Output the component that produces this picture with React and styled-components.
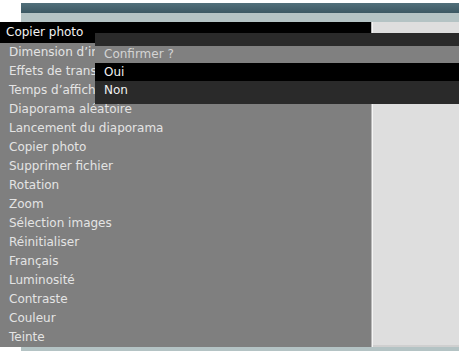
import styled, { createGlobalStyle } from "styled-components";

const GlobalStyle = createGlobalStyle`
  html, body {
    margin: 0;
    padding: 0;
    background: #ffffff;
  }
`;

const Screen = styled.div`
  position: relative;
  width: 459px;
  height: 351px;
  overflow: hidden;
  display: flex;
  flex-direction: column;
  background: #ffffff;
  font-family: "DejaVu Sans", Verdana, sans-serif;
  font-size: 12px;
`;

const TopStrip = styled.div`
  margin-left: 21px;
  padding-top: 3px;
  display: flex;
  flex-direction: column;
`;

const TealBar = styled.div`
  height: 10px;
  background: linear-gradient(#52707b, #3c5863);
`;

const PaleBar = styled.div`
  height: 9px;
  background: #b4c3c4;
`;

const Body = styled.div`
  display: flex;
  height: 325px;
`;

const Menu = styled.div`
  width: 371px;
  display: flex;
  flex-direction: column;
  background: #7f7f7f;
`;

const MenuHeader = styled.div`
  height: 21px;
  box-sizing: border-box;
  padding: 2px 0 0 6px;
  background: #000000;
  color: #f2f2f2;
  line-height: 17px;
`;

const MenuItem = styled.div`
  height: 19px;
  line-height: 19px;
  padding-left: 7px;
  margin-left: 2px;
  color: #e4e4e4;
  white-space: nowrap;
`;

const SidePanel = styled.div`
  flex: 1;
  background: #dedede;
  border-left: 1px solid #b8b8b8;
  box-shadow: inset 1px 0 0 #f4f4f4, inset 0 -2px 0 #cfcfcf;
`;

const BottomBar = styled.div`
  margin-left: 21px;
  height: 4px;
  background: #b4c3c4;
`;

const Dialog = styled.div`
  position: absolute;
  left: 95px;
  top: 33px;
  right: 0;
  background: #2a2a2a;
  padding: 13px 0 5px;
  display: flex;
  flex-direction: column;
`;

const DialogRow = styled.div`
  height: ${(p) => (p.$title ? 17 : 18)}px;
  line-height: ${(p) => (p.$title ? 17 : 18)}px;
  padding-left: 9px;
  background: ${(p) => (p.$title ? "#808080" : p.$active ? "#000000" : "transparent")};
  color: ${(p) => (p.$title ? "#d4d4d4" : "#f0f0f0")};
`;

const items = [
  "Dimension d'image",
  "Effets de transition",
  "Temps d'affichage",
  "Diaporama aléatoire",
  "Lancement du diaporama",
  "Copier photo",
  "Supprimer fichier",
  "Rotation",
  "Zoom",
  "Sélection images",
  "Réinitialiser",
  "Français",
  "Luminosité",
  "Contraste",
  "Couleur",
  "Teinte",
];

export default function App() {
  return (
    <>
      <GlobalStyle />
      <Screen>
        <TopStrip>
          <TealBar />
          <PaleBar />
        </TopStrip>
        <Body>
          <Menu>
            <MenuHeader>Copier photo</MenuHeader>
            {items.map((it) => (
              <MenuItem key={it}>{it.replace(/'/g, "’")}</MenuItem>
            ))}
          </Menu>
          <SidePanel />
        </Body>
        <BottomBar />
        <Dialog>
          <DialogRow $title>Confirmer ?</DialogRow>
          <DialogRow $active>Oui</DialogRow>
          <DialogRow>Non</DialogRow>
        </Dialog>
      </Screen>
    </>
  );
}
